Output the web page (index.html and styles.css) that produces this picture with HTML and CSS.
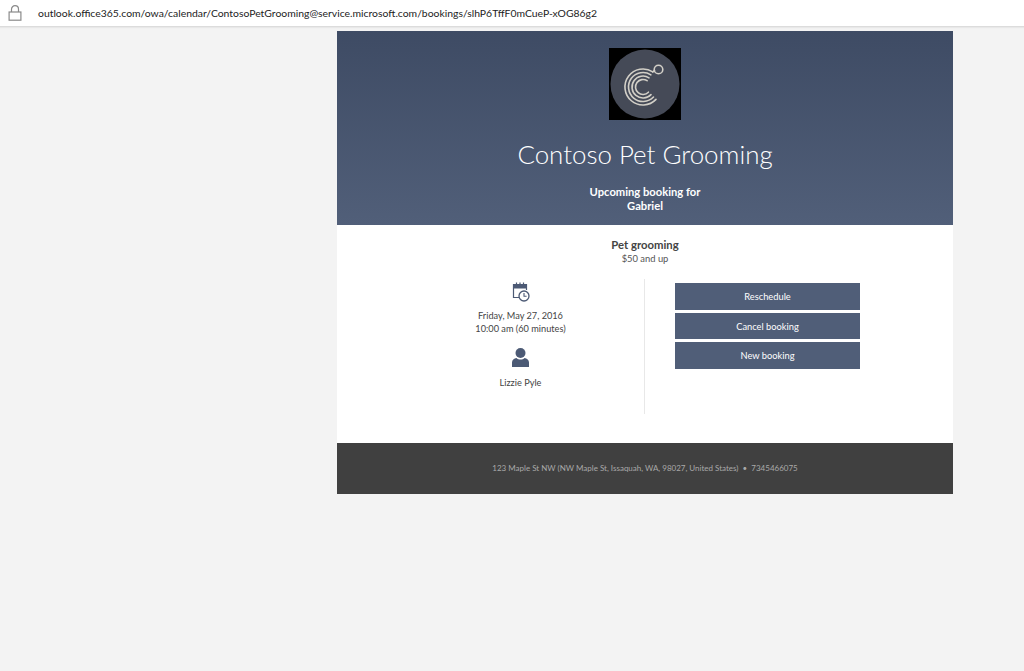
FILE: index.html
```html
<!DOCTYPE html>
<html lang="en">
<head>
    <meta charset="UTF-8">
    <title>Contoso Pet Grooming</title>
    <link rel="stylesheet" href="styles.css">
</head>
<body>
    <div class="address-bar">
        <svg class="lock" width="14" height="16" viewBox="0 0 14 16" fill="none" stroke="#8a8a8a" stroke-width="1.2">
            <rect x="1.1" y="7" width="11.8" height="8.2"/>
            <path d="M3.5 7V4.2a3.5 3.5 0 0 1 7 0V7"/>
        </svg>
        <span class="url">outlook.office365.com/owa/calendar/ContosoPetGrooming@service.microsoft.com/bookings/slhP6TffF0mCueP-xOG86g2</span>
    </div>

    <div class="card">
        <div class="header">
            <svg class="logo" width="72" height="72" viewBox="0 0 72 72" fill="none">
                <rect width="72" height="72" fill="#000"/>
                <circle cx="36" cy="36" r="34.5" fill="#454a57"/>
                <g stroke="#d2cfc7" stroke-width="1.6" stroke-linecap="round">
                    <path d="M47 51.4A18 18 0 1 1 43.800 23.900"/>
                    <path d="M44.500 49A14.500 14.500 0 1 1 41.900 26.800"/>
                    <path d="M42 46.600A11 11 0 1 1 40 29.800"/>
                    <path d="M39.400 44.200A7.500 7.500 0 1 1 38.100 32.700"/>
                    <path d="M43.800 23.900A6 6 0 0 1 45.500 22.500"/>
                    <circle cx="49.500" cy="21.500" r="4.300"/>
                </g>
            </svg>
            <h1 class="title">Contoso Pet Grooming</h1>
            <div class="upcoming">Upcoming booking for<br>Gabriel</div>
        </div>

        <div class="body">
            <div class="service">
                <div class="service-name">Pet grooming</div>
                <div class="service-price">$50 and up</div>
            </div>
            <div class="columns">
                <div class="details">
                    <svg class="icon-cal" width="18" height="20" viewBox="0 0 18 20" fill="none" stroke="#4c5a75">
                        <path d="M7 15.500H1.500V2.500H14.500V8" stroke-width="1.2"/>
                        <path d="M1.500 3h13v3h-13z" fill="#4c5a75" stroke-width="1"/>
                        <path d="M4.500 .5v3M8 .5v3M11.500 .5v3" stroke-width="1.2"/>
                        <circle cx="12" cy="14" r="5" fill="#fff" stroke-width="1.3"/>
                        <path d="M12 11v3.200h2.600" stroke-width="1.1"/>
                    </svg>
                    <div class="when">Friday, May 27, 2016<br>10:00 am (60 minutes)</div>
                    <svg class="icon-person" width="17" height="19" viewBox="0 0 17 19" fill="#4c5a75">
                        <circle cx="8.500" cy="5" r="5"/>
                        <path d="M0 19v-4.500c0-2.500 2-4 4.500-4.500 1 1 2.500 1.500 4 1.500s3-.5 4-1.500c2.500.5 4.500 2 4.500 4.500V19z"/>
                    </svg>
                    <div class="staff">Lizzie Pyle</div>
                </div>
                <div class="actions">
                    <a class="btn btn-first">Reschedule</a>
                    <a class="btn">Cancel booking</a>
                    <a class="btn btn-last">New booking</a>
                </div>
            </div>
        </div>

        <div class="footer">123 Maple St NW (NW Maple St, Issaquah, WA, 98027, United States) &nbsp;•&nbsp; 7345466075</div>
    </div>
</body>
</html>
```

FILE: styles.css
```css
body {
    margin: 0;
    background: #f3f3f3;
    font-family: Lato, 'Open Sans', Arial, sans-serif;
    color: #444;
}

.address-bar {
    height: 26px;
    background: #fff;
    border-bottom: 1px solid #dcdcdc;
    box-shadow: 0 1px 1px #e8e8e8;
    display: flex;
    align-items: center;
    padding-left: 8px;
}
.lock {
    margin-right: 16px;
}
.url {
    font-size: 10.4px;
    color: #222;
    white-space: nowrap;
}

.card {
    width: 616px;
    margin: 4px 0 0 337px;
    background: #fff;
}

.header {
    height: 194px;
    box-sizing: border-box;
    padding-top: 17px;
    background: linear-gradient(#3e4b64, #515f79);
    color: #fff;
    text-align: center;
}
.logo {
    display: block;
    margin: 0 auto;
}
.title {
    margin: 15px 0 0;
    font-size: 25.900px;
    line-height: 38px;
    font-weight: 300;
}
.upcoming {
    margin-top: 12px;
    font-size: 11.200px;
    line-height: 14px;
    font-weight: 700;
}

.body {
    height: 218px;
    box-sizing: border-box;
    padding-top: 13px;
}
.service {
    text-align: center;
}
.service-name {
    font-size: 11.300px;
    line-height: 14px;
    font-weight: 700;
    color: #444;
}
.service-price {
    font-size: 9.400px;
    line-height: 13px;
    color: #555;
}

.columns {
    display: flex;
    margin-top: 14px;
}
.details {
    width: 308px;
    height: 135px;
    padding-left: 60px;
    box-sizing: border-box;
    border-right: 1px solid #e8e8e8;
    text-align: center;
    font-size: 9.200px;
    line-height: 13px;
    color: #444;
}
.icon-cal {
    display: block;
    margin: 3px auto 0;
}
.when {
    margin-top: 7px;
}
.icon-person {
    display: block;
    margin: 13px auto 0;
}
.staff {
    margin-top: 9px;
}

.actions {
    margin-left: 30px;
    padding-top: 4px;
    width: 185px;
    display: flex;
    flex-direction: column;
    gap: 3px;
}
.btn {
    height: 26px;
    line-height: 27px;
    background: #505e78;
    color: #fff;
    font-size: 9.300px;
    text-align: center;
}
.btn-first, .btn-last {
    height: 27px;
}

.footer {
    height: 51px;
    line-height: 50px;
    background: #404040;
    color: #a9a9a9;
    font-size: 8px;
    text-align: center;
}
```
